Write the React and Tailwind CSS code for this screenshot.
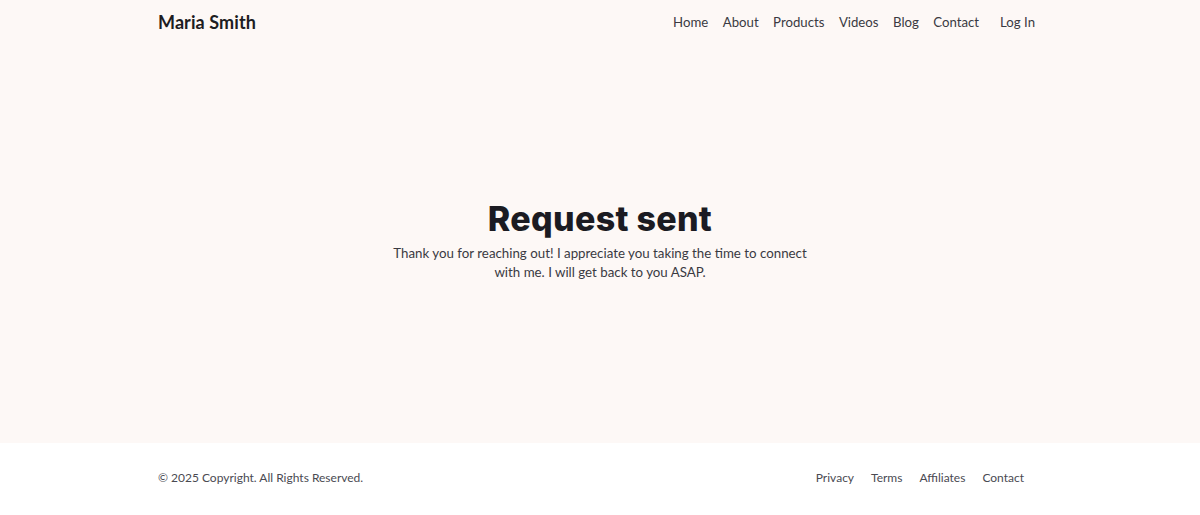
export default function App() {
  const nav = ["Home", "About", "Products", "Videos", "Blog", "Contact"];
  const foot = ["Privacy", "Terms", "Affiliates", "Contact"];
  return (
    <div className="min-h-[515px] flex flex-col bg-white text-[#2b2b33]" style={{ fontFamily: "Lato, 'Noto Sans', sans-serif" }}>
      <div className="bg-[#fdf8f6] h-[443px] flex flex-col">
        <header className="mx-auto w-[884px] h-[45px] flex items-center justify-between">
          <div className="text-[18px] font-bold text-[#1d1d22] tracking-[0.1px]">Maria Smith</div>
          <nav className="flex items-center text-[13.2px] text-[#3a3a42] pr-[7px]">
            <div className="flex items-center gap-[14.5px]">
              {nav.map((n) => (
                <span key={n}>{n}</span>
              ))}
            </div>
            <span className="ml-[21px]">Log In</span>
          </nav>
        </header>
        <main className="flex-1 flex flex-col items-center justify-center text-center pb-[8px]">
          <h1 className="text-[34px] leading-[42px] font-extrabold text-[#1b1b22] tracking-[0.3px]" style={{ fontFamily: "Inter, sans-serif" }}>Request sent</h1>
          <p className="mt-[4px] w-[422px] text-[13.3px] leading-[19.5px] text-[#3a3a42]">
            Thank you for reaching out! I appreciate you taking the time to connect with me. I will get back to you ASAP.
          </p>
        </main>
      </div>
      <footer className="mx-auto w-[884px] h-[70px] flex items-center justify-between text-[12px] text-[#4a4a52]">
        <span>© 2025 Copyright. All Rights Reserved.</span>
        <div className="flex items-center gap-[17px] pr-[18px]">
          {foot.map((f) => (
            <span key={f}>{f}</span>
          ))}
        </div>
      </footer>
    </div>
  );
}
